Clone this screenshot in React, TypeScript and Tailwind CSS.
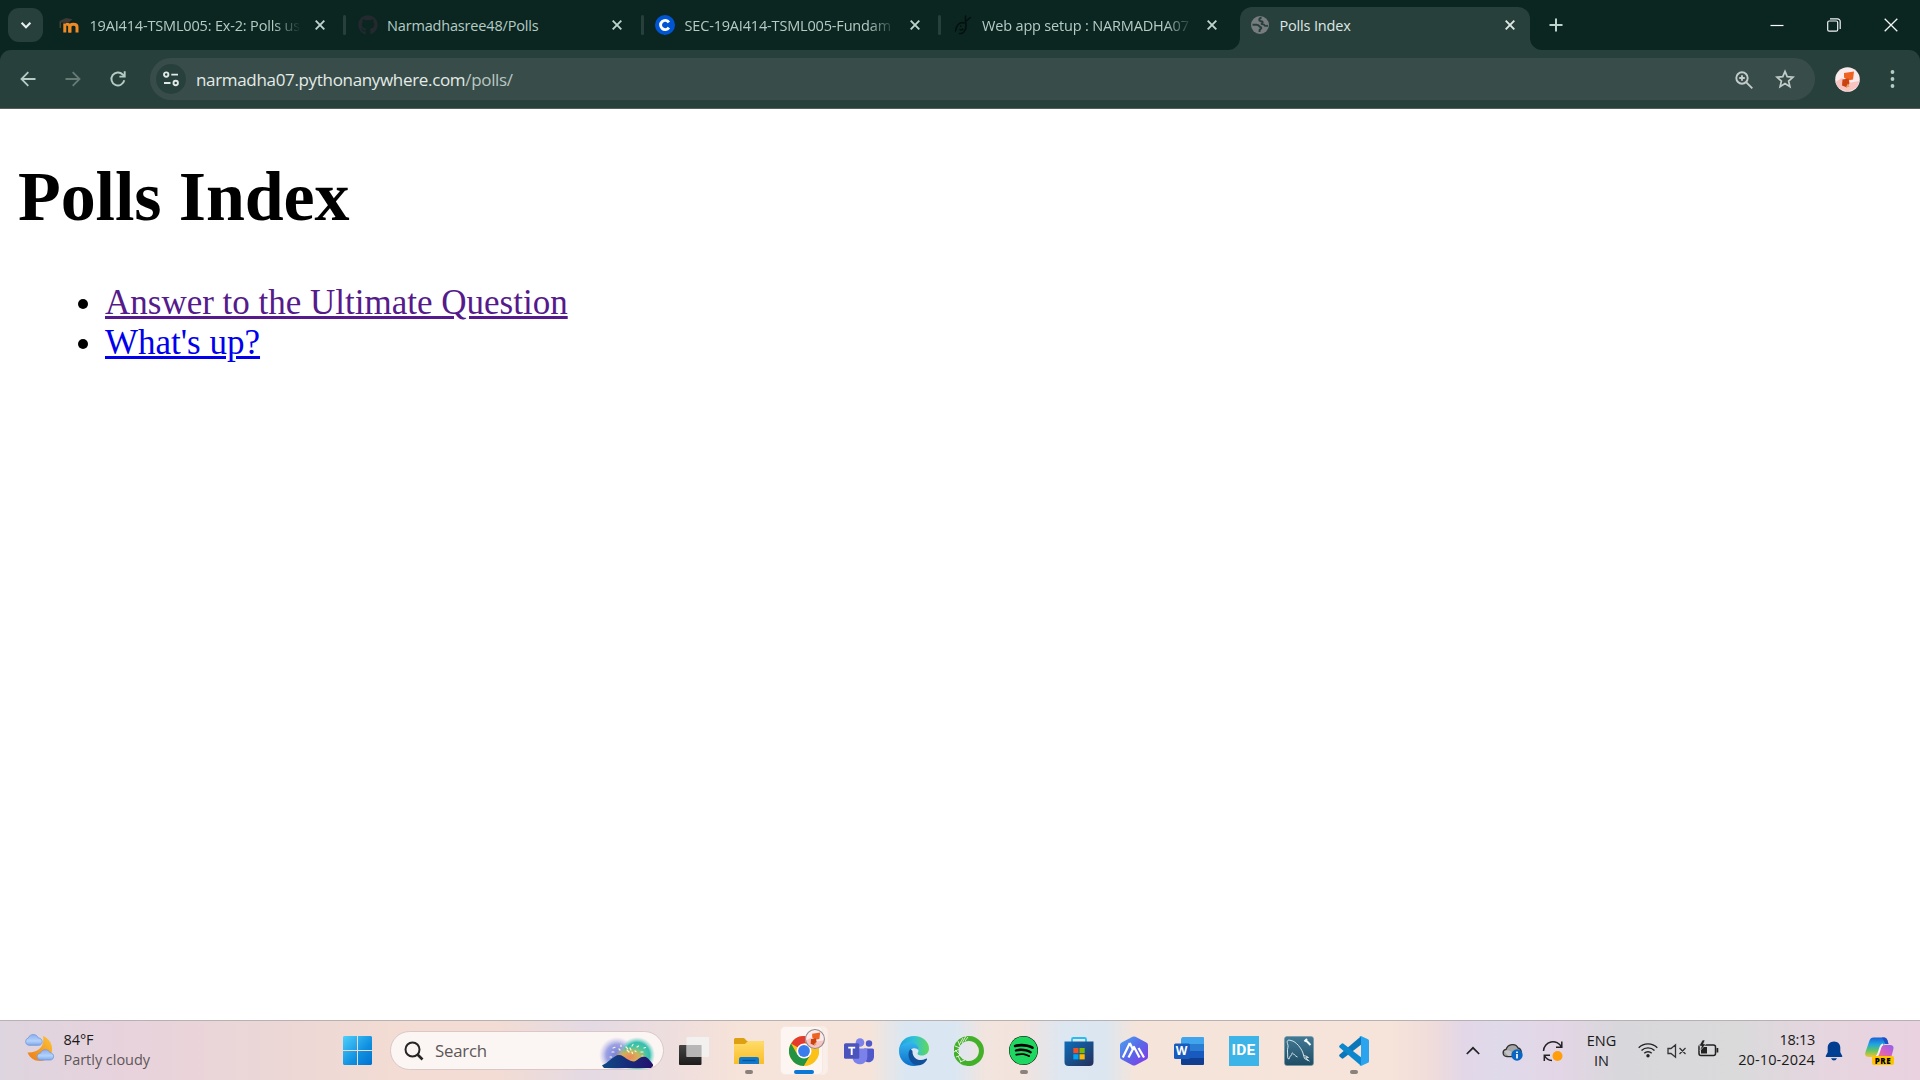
import React from "react";
import { FaGithub, FaSpotify } from "react-icons/fa";

type P = { children: React.ReactNode; className?: string };

/* ---------- favicons ---------- */
const Moodle = () => (
  <svg width="22" height="20" viewBox="0 0 22 20" className="-ml-0.5 shrink-0">
    <path d="M6.800 17.500V8.500M11.800 17.500v-5.700c0-2.200-2-2.800-3.500-2.300" fill="none" stroke="#f08a24" strokeWidth="3" />
    <path d="M11.800 17.500v-5.500c0-3.600 7.200-3.600 7.200 0v5.500" fill="none" stroke="#f08a24" strokeWidth="3" />
    <path d="M1 6.300 8 3l6.500 1.200L10 8 3.500 7.500z" fill="#3d3a36" />
    <path d="M2.200 7v6" stroke="#6b5337" strokeWidth="1" />
  </svg>
);
const Coursera = () => (
  <svg width="20" height="20" viewBox="0 0 20 20">
    <circle cx="10" cy="10" r="10" fill="#0056d2" />
    <path d="M13.900 7.300a4.600 4.600 0 1 0 0 5.400" fill="none" stroke="#fff" strokeWidth="2.900" />
  </svg>
);
const Snake = () => (
  <svg width="20" height="20" viewBox="0 0 20 20" fill="none" stroke="#03100d" strokeWidth="1.500" strokeLinecap="round">
    <path d="M12.500 1v5.500L17.500 2.500M12.500 6.500c1.500 5 .5 9-3.500 12H6.500M11 8C7 6.500 3 10 2.500 16M7.500 11l.2.2M7 14.500c1 .8 2 .5 2.800-.4" />
  </svg>
);
const Globe = () => (
  <svg width="20" height="20" viewBox="0 0 20 20">
    <circle cx="10" cy="10" r="9" fill="#777c7f" />
    <path d="M11.500 2.500c-1.500.5-2.800 1.600-2 3 .7 1.200 2.300.3 3 1.300.6 1-.5 1.800-1.500 2 1 .3 3 .2 3.500 1.400.4.800 1.500.8 3.500.6M2.500 9.800h4c2.500 0 2.600 1.600 3.800 2.200 1.300.6 1.300 1.500.2 2-1 .5-1.200 1.400-1 3" fill="none" stroke="#28403c" strokeWidth="2" />
  </svg>
);
const X = ({ c = "#bdd3cc" }: { c?: string }) => (
  <svg width="20" height="20" viewBox="0 0 20 20">
    <path d="m5.700 5.700 8.600 8.600m0-8.600-8.600 8.600" stroke={c} strokeWidth="1.900" />
  </svg>
);
const Fox = ({ size, ring }: { size: number; ring?: boolean }) => (
  <svg width={size} height={size} viewBox="0 0 25 25">
    <circle cx="12.500" cy="12.500" r="12.300" fill="#fbeaec" />
    <path d="M.5 15 7 11l6 5 11.500-2A12.300 12.300 0 0 1 .5 15z" fill="#f9c3c0" />
    <path d="m9 6 10-1.500-1 8-5 1-4-3z" fill="#ee6322" />
    <path d="m7.500 12.500 6-1 1 4.500-2.500 4.500-5-2z" fill="#c9420f" />
    <path d="m11 20 2-3.500 1.500 3.500z" fill="#e2a764" />
    {ring && <circle cx="12.500" cy="12.500" r="11.800" fill="none" stroke="#8f8a8d" strokeWidth="1.300" />}
  </svg>
);

/* ---------- tabs ---------- */
function Tab({ icon, title, active, last, fade }: { icon: React.ReactNode; title: string; active?: boolean; last?: boolean; fade?: boolean }) {
  return (
    <div className="relative flex h-[43px] w-[297.5px] shrink-0">
      <div className={"flex h-full w-[290.5px] items-center rounded-t-[12px] pb-[7px] pl-[10.5px] " + (active ? "bg-[#28403c] text-[#dfe8e4]" : "text-[#b5cbc4]")}>
        <div className="flex size-5 shrink-0 items-center justify-center">{icon}</div>
        <div className={"mt-px ml-[9.5px] w-[213px] text-[14.5px] leading-5 tracking-[-0.17px] whitespace-nowrap " + (fade ? "[mask-image:linear-gradient(to_right,#000_86%,transparent_99%)]" : "")}>{title}</div>
        <div className="ml-[7px]"><X c={active ? "#dfe8e4" : "#bdd3cc"} /></div>
      </div>
      {active ? (
        <>
          <svg className="absolute bottom-0 -left-3" width="12" height="12"><path d="M12 0v12H0A12 12 0 0 0 12 0z" fill="#28403c" /></svg>
          <svg className="absolute bottom-0 left-[290px]" width="12" height="12"><path d="M0 0v12h12A12 12 0 0 1 0 0z" fill="#28403c" /></svg>
        </>
      ) : (
        !last && <div className="mt-2 ml-[3px] h-5 w-[3px] rounded-full bg-[#27403b]" />
      )}
    </div>
  );
}

const Ctl = ({ children, className = "" }: P) => <div className={"flex h-[49px] w-[57px] items-center justify-center " + className}>{children}</div>;

function TabStrip() {
  return (
    <div className="flex h-[50px] bg-[#0b2621]">
      <div className="mt-2 ml-2 flex h-[34px] w-[35px] shrink-0 items-center justify-center rounded-[11px] bg-[#28403c]">
        <svg width="14" height="14" viewBox="0 0 14 14" fill="none" stroke="#e8f0ed" strokeWidth="2.100"><path d="m2.600 4.800 4.400 4.400 4.400-4.400" /></svg>
      </div>
      <div className="mt-[7px] ml-[6.500px] flex h-[43px]">
        <Tab icon={<Moodle />} title="19AI414-TSML005: Ex-2: Polls us" fade />
        <Tab icon={<FaGithub size={20} color="#24292f" />} title="Narmadhasree48/Polls" />
        <Tab icon={<Coursera />} title="SEC-19AI414-TSML005-Fundam" fade />
        <Tab icon={<Snake />} title="Web app setup : NARMADHA07" fade last />
        <Tab icon={<Globe />} title="Polls Index" active />
      </div>
      <div className="flex h-[50px] w-[38px] items-center justify-center">
        <svg width="14" height="14" viewBox="0 0 14 14" stroke="#bdd3cc" strokeWidth="2"><path d="M7 .5v13M.5 7h13" /></svg>
      </div>
      <div className="mr-px ml-auto flex">
        <Ctl><svg width="14" height="14"><path d="M.5 7.500h13" stroke="#fff" strokeWidth="1.200" /></svg></Ctl>
        <Ctl>
          <svg width="14" height="14" viewBox="0 0 14 14" fill="none" stroke="#f2f5f4" strokeWidth="1.200">
            <rect x=".7" y="3" width="10" height="10.200" rx="1.500" /><path d="M3 .9h7.500a2.600 2.600 0 0 1 2.700 2.600V11" />
          </svg>
        </Ctl>
        <Ctl><svg width="14" height="14" viewBox="0 0 14 14" stroke="#f2f5f4" strokeWidth="1.300"><path d="m.7.7 12.600 12.600m0-12.600L.7 13.300" /></svg></Ctl>
      </div>
    </div>
  );
}

const Arrow = ({ c, flip }: { c: string; flip?: boolean }) => (
  <svg width="16" height="16" viewBox="0 0 16 16" fill="none" stroke={c} strokeWidth="1.800" className={flip ? "rotate-180" : ""}>
    <path d="M15.500 8H1.800M8.300 1.200 1.500 8l6.800 6.800" />
  </svg>
);

function Toolbar() {
  return (
    <div className="bg-[#0b2621]">
      <div className="flex h-[59px] items-center rounded-t-[11px] border-b border-[#55605f] bg-[#28403c]">
        <div className="ml-[19.500px] w-[45px]"><Arrow c="#b5cbc4" /></div>
        <div className="w-[44px]"><Arrow c="#667b76" flip /></div>
        <svg width="18" height="18" viewBox="0 0 18 18" fill="none" stroke="#b5cbc4" strokeWidth="1.900">
          <path d="M15.300 10.300A6.500 6.500 0 1 1 13.700 4.500l1.600 1.700" /><path d="M15.700 1.300v5.300h-5.300" />
        </svg>
        <div className="ml-[23.500px] flex h-[42px] w-[1665px] items-center rounded-full bg-[#384d49] pr-[20px] pl-[6px]">
          <div className="flex size-[30px] items-center justify-center rounded-full bg-[#28403c]">
            <svg width="16" height="16" viewBox="0 0 16 16" fill="none" stroke="#dfe8e4" strokeWidth="1.900">
              <circle cx="3.200" cy="3.600" r="2.200" /><path d="M8.300 3.600H15M1 12h6.500" /><circle cx="12.700" cy="12" r="2.200" />
            </svg>
          </div>
          <div className="mt-0.5 ml-[10px] text-[17px] leading-6 tracking-[-0.33px] text-[#e4ebe8]">narmadha07.pythonanywhere.com<span className="text-[#b9c7c3]">/polls/</span></div>
          <svg className="mt-0.5 mr-[22px] ml-auto" width="18" height="18" viewBox="0 0 18 18" fill="none" stroke="#c3ccca" strokeWidth="1.900">
            <circle cx="7" cy="7" r="5.700" /><path d="m11.300 11.300 6 6M4.200 7h5.600M7 4.200v5.600" />
          </svg>
          <svg width="20" height="20" viewBox="0 0 20 20" fill="none" stroke="#c3ccca" strokeWidth="1.700">
            <path d="m10 2.400 2.200 5.300 5.800.5-4.400 3.800 1.300 5.600-4.900-3-4.900 3 1.300-5.600L2 8.200l5.800-.5z" />
          </svg>
        </div>
        <div className="ml-5"><Fox size={25} /></div>
        <svg className="ml-[22px]" width="20" height="20" viewBox="0 0 20 20" fill="#b5cbc4"><circle cx="10.500" cy="3" r="1.900" /><circle cx="10.500" cy="10" r="1.900" /><circle cx="10.500" cy="17" r="1.900" /></svg>
      </div>
    </div>
  );
}

function Page() {
  return (
    <main className="h-[911px] overflow-hidden bg-white px-[17.500px] font-['Liberation_Serif',serif] text-black">
      <h1 className="mt-[48px] ml-[0.500px] text-[70px] leading-[80px] font-bold tracking-[-0.100px]">Polls Index</h1>
      <ul className="mt-[46px] list-disc pl-[87.500px] text-[35px] leading-[40px]">
        <li><a className="text-[#551a8b] underline">Answer to the Ultimate Question</a></li>
        <li><a className="text-[#0000ee] underline">What's up?</a></li>
      </ul>
    </main>
  );
}

/* ---------- taskbar ---------- */
const Weather = () => (
  <svg width="31" height="30" viewBox="0 0 31 30">
    <defs>
      <linearGradient id="moon" x1="1" y1="0" x2="0" y2="1"><stop stopColor="#fdc53a" /><stop offset="1" stopColor="#ec7a16" /></linearGradient>
      <linearGradient id="cl" x1="0" y1="0" x2="0" y2="1"><stop stopColor="#8db0f0" /><stop offset=".6" stopColor="#b3d2fa" /><stop offset="1" stopColor="#7fa6ea" /></linearGradient>
    </defs>
    <path d="M19 3c14 6 11 25-3 25-6 0-10-3-12.500-8.500C14 20 21 14 19 3z" fill="url(#moon)" />
    <path d="M4.500 12.300a3.800 3.800 0 0 1-.3-7.300C6 .4 12.500.3 14.300 5c5 0 5.200 7.300.3 7.300z" fill="url(#cl)" stroke="#7398dd" strokeWidth=".8" />
    <path d="M16.500 27a3.400 3.400 0 0 1 0-6.800c1.600-4.600 8-4.600 9.300-.6 5 .2 5 7.400.5 7.400z" fill="url(#cl)" stroke="#7398dd" strokeWidth=".8" />
  </svg>
);
const Windows = () => (
  <svg width="29" height="29" viewBox="0 0 29 29">
    <defs><linearGradient id="win" x1="0" y1="0" x2="1" y2="1"><stop stopColor="#4fd0fb" /><stop offset=".6" stopColor="#0f8fe0" /><stop offset="1" stopColor="#0072cf" /></linearGradient></defs>
    <path d="M1 0h13v14H0V1zM15 0h13l1 1v13H15zM0 15h14v14H1l-1-1zM15 15h14v13l-1 1H15z" fill="url(#win)" />
  </svg>
);
const Fireworks = () => (
  <svg width="56" height="32" viewBox="0 0 56 32">
    <defs>
      <radialGradient id="f1"><stop stopColor="#6c7be0" /><stop offset=".6" stopColor="#8c93e0" stopOpacity=".85" /><stop offset="1" stopColor="#b7b5ea" stopOpacity="0" /></radialGradient>
      <radialGradient id="f2"><stop stopColor="#6fd08e" /><stop offset=".7" stopColor="#35bfb0" /><stop offset="1" stopColor="#7bd6cc" stopOpacity="0" /></radialGradient>
      <radialGradient id="f3"><stop stopColor="#f4845a" /><stop offset=".5" stopColor="#dfae52" stopOpacity=".9" /><stop offset="1" stopColor="#d8b64c" stopOpacity="0" /></radialGradient>
      <linearGradient id="f4"><stop stopColor="#0c4a86" /><stop offset="1" stopColor="#24106e" /></linearGradient>
    </defs>
    <circle cx="18" cy="18" r="18" fill="url(#f1)" /><circle cx="38" cy="18" r="18" fill="url(#f2)" />
    <ellipse cx="31" cy="20" rx="17" ry="10" fill="url(#f3)" />
    <path d="M14 11l2-.7M13 15h2M22 8v1.500M27 10l1.500 1.500M28 13l2 2M33 9l1-1.500M38 10l1.500-1M42 15h2M45 11l1.500-.5M36 14l1 .5M33 15l.5 1.500M20 12l1 1M11 20h1.500M43 19l2 .5M31 11l1 2" stroke="#fff6cf" strokeWidth="1.200" strokeLinecap="round" />
    <path d="M3 28.500c3-1.500 5-3 8-5.500 4-3 6-5 9-5s5 2 8 4c3 1.500 4 2.500 7 2.500 3-.5 6-5 10-5 3 0 6 4 9 8v1.500l-2 2H5z" fill="url(#f4)" />
  </svg>
);
const TaskView = () => (
  <svg width="30" height="30" viewBox="0 0 30 30">
    <defs><linearGradient id="tv" x1="0" y1="0" x2="0" y2="1"><stop stopColor="#454545" /><stop offset="1" stopColor="#1c1c1c" /></linearGradient></defs>
    <rect y="9" width="22.500" height="20" rx="1" fill="url(#tv)" />
    <rect x="7.500" y="1" width="22.500" height="20" rx="1" fill="#f3f3f3" fillOpacity=".88" />
    <path d="M7.500 9h15v12h-15z" fill="#aaa" fillOpacity=".75" />
  </svg>
);
const Folder = () => (
  <svg width="30" height="30" viewBox="0 0 30 30">
    <defs><linearGradient id="fo" x1="0" y1="0" x2="0" y2="1"><stop stopColor="#ffdc6a" /><stop offset="1" stopColor="#f9bd27" /></linearGradient></defs>
    <path d="M0 3.500Q0 2 1.500 2H10l3 3h15.500Q30 5 30 6.500V12H0z" fill="#dca012" />
    <path d="M0 8h11l3-3h14.500Q30 5 30 6.500V28H0z" fill="url(#fo)" />
    <path d="M5 28v-5a2 2 0 0 1 2-2h16a2 2 0 0 1 2 2v5z" fill="#1079cb" /><path d="M8.500 24.500h13" stroke="#07559c" strokeWidth="1.300" />
  </svg>
);
const Chrome = () => (
  <svg width="30" height="30" viewBox="0 0 30 30">
    <circle cx="15" cy="15" r="15" fill="#fbc116" />
    <path d="M15 15 2 7.500A15 15 0 0 1 28 7.500H15z" fill="#e33b2e" />
    <path d="M2 7.500A15 15 0 0 0 15 30l6.500-11.200L15 15 8.500 18.800z" fill="#229342" />
    <path d="M15 7.500H28A15 15 0 0 1 15 30l6.500-11.200z" fill="#fbc116" />
    <circle cx="15" cy="15" r="7.500" fill="#fff" /><circle cx="15" cy="15" r="5.900" fill="#3a7cec" />
  </svg>
);
const Teams = () => (
  <svg width="30" height="30" viewBox="0 0 30 30">
    <circle cx="16" cy="6.500" r="4.300" fill="#7b83eb" /><circle cx="25" cy="7.500" r="3.200" fill="#5059c9" />
    <path d="M20 12.500h8.500q1.500 0 1.500 1.500v6.500a5.500 5.500 0 0 1-9 4.500z" fill="#5059c9" />
    <path d="M9 12.500h13q1.300 0 1.300 1.300V21a7.500 7.500 0 0 1-14.500 2.500z" fill="#7b83eb" />
    <rect y="7.300" width="15.300" height="15.500" rx="1.500" fill="#4b53bc" />
    <path d="M4.200 11.600h7M7.700 11.600v7.400" stroke="#fff" strokeWidth="1.900" />
  </svg>
);
const Edge = () => (
  <svg width="30" height="30" viewBox="0 0 30 30">
    <defs>
      <linearGradient id="e1"><stop stopColor="#1f9fe0" /><stop offset=".5" stopColor="#2fc2d8" /><stop offset="1" stopColor="#62d858" /></linearGradient>
      <linearGradient id="e2" x1="0" y1="0" x2="0" y2="1"><stop stopColor="#35b4ee" /><stop offset="1" stopColor="#0b6fca" /></linearGradient>
    </defs>
    <path d="M0 14C1 5 7 0 15 0c9 0 15 6 15 12.500 0 4.500-3.500 7-7 7-3.500 0-5.300-1.300-4-3 2-3-.5-8.500-7-8.500-5 0-9 2-12 6z" fill="url(#e1)" />
    <path d="M0 15c0-5 5-8.500 10-8.500 7 0 10.500 4.500 9.500 8-2-3.500-9-3-9 3.500 0 5 4 9 9 11.300C10 32 0 26 0 15z" fill="url(#e2)" />
    <path d="M11.500 13C8 17 9 25 15.500 28.500c6 2.500 11-1.500 12.500-5 .4-1-.5-1.300-1.200-.8-7 3.600-13.800-.7-13.300-7.700z" fill="#11509b" />
  </svg>
);
const Anaconda = () => (
  <svg width="30" height="30" viewBox="0 0 30 30" fill="none" stroke="#43b02a">
    <path d="M15 2.500a12.500 12.500 0 1 1-5 24" strokeWidth="5" />
    <path d="M15 2.500A12.500 12.500 0 0 0 11 27" strokeWidth="5" />
    <path d="M12 0 8 7M9 2 5 9M4 5l2 5M1 10l5 2M0 16l5-3M1 14l5 5M2 21l5-2M4 20l3 6M6 26l5-2M14 1l-3 4" stroke="#f0efe6" strokeWidth=".9" />
  </svg>
);
const Store = () => (
  <svg width="30" height="30" viewBox="0 0 30 30">
    <defs><linearGradient id="st" x1="0" y1="0" x2="1" y2="1"><stop stopColor="#0d6dbb" /><stop offset="1" stopColor="#25305a" /></linearGradient></defs>
    <path d="M8 6V3.200Q8 2 9.200 2h11.600Q22 2 22 3.200V6" fill="none" stroke="#27bdf0" strokeWidth="1.800" />
    <path d="M.5 5.500h29V26a4 4 0 0 1-4 4h-21a4 4 0 0 1-4-4z" fill="url(#st)" />
    <path d="M9.300 12h5.200v5.200H9.300z" fill="#f25022" /><path d="M15.500 12h5.200v5.200h-5.200z" fill="#7fba00" />
    <path d="M9.300 18.200h5.200v5.200H9.300z" fill="#00a4ef" /><path d="M15.500 18.200h5.200v5.200h-5.200z" fill="#ffb900" />
  </svg>
);
const Hex = () => (
  <svg width="30" height="30" viewBox="0 0 30 30">
    <defs><linearGradient id="hx" x1="0" y1="0" x2="1" y2="1"><stop stopColor="#4ba3f0" /><stop offset=".5" stopColor="#5868e8" /><stop offset="1" stopColor="#8a35ea" /></linearGradient></defs>
    <path d="M13.500.8Q15 0 16.500.8l10.800 5.700Q29 7.400 29 9v12q0 1.600-1.700 2.500l-10.800 5.700q-1.500.8-3 0L2.700 23.500Q1 22.600 1 21V9q0-1.600 1.700-2.500z" fill="url(#hx)" />
    <path d="m3.800 21.500 7-14.500M10.800 7l3.400 7M9.500 21.500l5.500-10.500 5.500 10.500M19.500 12l5.500 9.500" fill="none" stroke="#fff" strokeWidth="2.200" strokeLinejoin="round" />
  </svg>
);
const Word = () => (
  <div className="relative size-[30px]">
    <svg width="30" height="30" viewBox="0 0 30 30">
      <path d="M8.500 1H29q1 0 1 1v6H7V2.500z" fill="#41a5ee" /><path d="M7 8h23v7H7z" fill="#2b7cd3" /><path d="M7 15h23v7H7z" fill="#185abd" /><path d="M7 22h23v6q0 1-1 1H8.500Q7 29 7 28z" fill="#103f91" />
      <rect y="7.500" width="16" height="15.500" rx="1.500" fill="#185abd" />
    </svg>
    <span className="absolute top-[7px] left-0 w-4 text-center text-[12px] leading-4 font-bold text-white">W</span>
  </div>
);
const Ide = () => <div className="flex size-[30px] items-center justify-center bg-[#3db4e7] pb-px font-[Roboto,sans-serif] text-[15.500px] leading-5 font-bold tracking-[0.2px] text-white">IDE</div>;
const Workbench = () => (
  <svg width="30" height="30" viewBox="0 0 30 30">
    <defs><linearGradient id="wb" x1="0" y1="0" x2="0" y2="1"><stop stopColor="#427a96" /><stop offset="1" stopColor="#1f4c65" /></linearGradient></defs>
    <rect x=".5" y=".5" width="29" height="29" rx="2.500" fill="url(#wb)" stroke="#6d94a5" strokeWidth=".6" />
    <path d="M7 19.500c-2 .5-1 4-2.500 3.500-1.500-1-.5-4.500-1-7C3 12 5 11 3.500 7.500 2.500 4.500 4 3.500 7 4.500c3 .5 5 2.500 7.500 5 3 3.500 4.500 7 5 9.500.8 1 4 1.200 5 2.500l-3 .3 4 3.500M19.500 19l1 3.500 3.500 2M7.500 19.500c.5-1.500 0-2.500 1-2.500 1.500 1 2.500 3 5 4" fill="none" stroke="#e7f0f3" strokeWidth=".9" />
    <path d="m21.500 4 5 5M20.500 5.500l2.500-2.500" stroke="#fff" strokeWidth="2" />
  </svg>
);
const VSCode = () => (
  <svg width="30" height="30" viewBox="0 0 30 30">
    <path d="M22 .2v8.500L4.500 22.300q-1 .7-1.900 0L.6 20.500q-1-1 0-2z" fill="#0b77b9" />
    <path d="M22 29.800v-8.500L4.500 7.700q-1-.7-1.900 0L.6 9.500q-1 1 0 2z" fill="#0c86cd" />
    <path d="M22 .1 29 3.300q1 .5 1 1.500v20.400q0 1-1 1.500l-7 3.200q-1 .3-1.800-.5 1.800 1 1.800-1.400V2q0-2.300-1.800-1.300Q21-.2 22 .1z" fill="#2aa4ef" />
  </svg>
);
const Copilot = () => (
  <div className="relative h-[30px] w-[30px]">
    <svg width="30" height="30" viewBox="0 0 30 30">
      <defs>
        <linearGradient id="c1" x1="0" y1="0" x2="0" y2="1"><stop stopColor="#1b5fd8" /><stop offset=".35" stopColor="#20a5e0" /><stop offset=".65" stopColor="#5cc46a" /><stop offset="1" stopColor="#f2c52b" /></linearGradient>
        <linearGradient id="c2" x1="1" y1="0" x2="0" y2="1"><stop stopColor="#8e62f0" /><stop offset=".5" stopColor="#d660c0" /><stop offset="1" stopColor="#f58255" /></linearGradient>
      </defs>
      <path d="M8.500 1.500H19q2.500 0 3.500 3l1 3.500h-3q-3 0-4 3l-3 7q-1 3-4.500 3H4q-5 0-3.500-5L4.500 4.500q1-3 4-3z" fill="url(#c1)" />
      <path d="M20 9h5q4.500 0 3.300 4.500L26 22H9q3 0 4-3l2.500-7Q16.500 9 20 9z" fill="url(#c2)" />
      <path d="M17 1.500h2q2.500 0 3.500 3l1 3.500h-3z" fill="#1f4fc4" />
      <path d="M18 8.500c-4 0-3 12-8 13" stroke="#f8eef4" strokeWidth="2" fill="none" />
    </svg>
    <span className="absolute top-[20px] left-[7px] h-[9px] w-[22px] rounded-[2px] bg-[#fdc500] text-center text-[8px] leading-[9px] font-extrabold tracking-[0.5px] text-black">PRE</span>
  </div>
);

const Slot = ({ children, dot }: { children: React.ReactNode; dot?: boolean }) => (
  <div className="relative flex h-full w-[55px] items-center justify-center">
    {children}
    {dot && <span className="absolute bottom-[6px] left-[23.500px] h-1 w-2 rounded-full bg-[#8a807c]" />}
  </div>
);

function Taskbar() {
  return (
    <div className="flex h-[60px] items-center border-t border-[#b8b1b2] bg-[linear-gradient(90deg,#ddd5df_0px,#e8d2dc_130px,#ecd7d6_280px,#f2dcd3_400px,#f2dcd4_500px,#e4dae4_590px,#f0dfdc_690px,#f6e3d9_740px,#f6e4da_870px,#dae7f2_905px,#dae7f2_955px,#f2e4de_985px,#f3e3dd_1020px,#dce7f2_1065px,#dce6f1_1105px,#f5e4da_1135px,#f6e4da_1390px,#f0dcda_1430px,#e2d7e8_1465px,#dfdaea_1500px,#e3d6e6_1560px,#d8d7db_1620px,#dadadb_1740px,#e6d5df_1830px,#ead2e0_1920px)] text-[14.500px] text-[#1a1a1a]">
      <div className="flex w-[343px] items-center pb-px pl-[24px]">
        <div className="-mt-1"><Weather /></div>
        <div className="ml-[8.500px] leading-5">
          <div className="tracking-[-0.1px]">84°F</div>
          <div className="tracking-[-0.030px] text-[#5d5759]">Partly cloudy</div>
        </div>
      </div>
      <Windows />
      <div className="ml-[17.500px] flex h-[39px] w-[274px] items-center rounded-full border border-[#dbc8c6] bg-[#fbf5f3] pl-[13px]">
        <svg width="20" height="20" viewBox="0 0 20 20" fill="none" stroke="#262626" strokeWidth="2"><circle cx="8.500" cy="8.500" r="7" /><path d="m13.500 13.500 5 5" strokeWidth="2.600" /></svg>
        <span className="mt-px ml-[11.500px] text-[16.800px] tracking-[-0.200px] text-[#5b5757]">Search</span>
        <div className="mt-1 mr-[8px] ml-auto"><Fireworks /></div>
      </div>
      <div className="ml-[2.500px] flex h-full">
        <Slot><TaskView /></Slot>
        <Slot dot><Folder /></Slot>
        <div className="relative flex h-full w-[55px] items-center justify-center">
          <div className="absolute top-[5px] left-[3.500px] h-[49px] w-[48px] rounded-[5px] border border-[#f9ece6] bg-[#faeee8]" />
          <div className="absolute top-[5px] left-[3.500px] h-[49px] w-[43px] rounded-[5px] border border-[#f6e8e2] bg-[#fdf5f1]" />
          <div className="relative"><Chrome /></div>
          <div className="absolute top-[8px] left-[28.500px]"><Fox size={20} ring /></div>
          <div className="absolute bottom-[6px] left-[17.500px] h-1 w-5 rounded-full bg-[#0a78d4]" />
        </div>
        <Slot><Teams /></Slot>
        <Slot><Edge /></Slot>
        <Slot><Anaconda /></Slot>
        <Slot dot><div className="rounded-full bg-black"><FaSpotify size={29} color="#1ed760" /></div></Slot>
        <Slot><Store /></Slot>
        <Slot><Hex /></Slot>
        <Slot><Word /></Slot>
        <Slot><Ide /></Slot>
        <Slot><Workbench /></Slot>
        <Slot dot><VSCode /></Slot>
      </div>
      <svg className="ml-[84.500px]" width="14" height="14" viewBox="0 0 14 14" fill="none" stroke="#222" strokeWidth="1.700"><path d="m.8 10 6.200-6.200L13.200 10" /></svg>
      <svg className="mt-[3px] ml-[22px]" width="21" height="20" viewBox="0 0 21 20">
        <path d="M5 14.500C0 14 0 8.500 4 7.500 6 1.500 14 1 16 6c4 1 4 6 2 8.500z" fill="#a6a6a6" stroke="#303030" strokeWidth="1.300" />
        <path d="M2 9c4-2 7 0 9 2l5 3H6" fill="#c4c4c4" />
        <circle cx="15" cy="13" r="5.700" fill="#0a66c2" /><path d="M15 9.500v1.500M15 12v4.500" stroke="#fff" strokeWidth="1.700" />
      </svg>
      <svg className="ml-[19px]" width="22" height="22" viewBox="0 0 22 22" fill="none" stroke="#222" strokeWidth="1.500">
        <path d="M1.500 11A9.500 9.500 0 0 1 19.500 7M19.800 1.500V7.300H14M10 20.500a9 9 0 0 1-7.500-5M8 15.200H2.300V21" />
        <circle cx="15.500" cy="16" r="5" fill="#ff9d0a" stroke="none" />
      </svg>
      <div className="ml-[13px] w-[50px] text-center leading-5"><div>ENG</div><div>IN</div></div>
      <svg className="mt-[-1px] ml-[11px]" width="20" height="16" viewBox="0 0 20 16" fill="none" stroke="#222" strokeWidth="1.400">
        <path d="M.7 5.700a13.200 13.200 0 0 1 18.600 0M3.500 8.600a9.200 9.200 0 0 1 13 0M6.300 11.300a5.300 5.300 0 0 1 7.400 0" /><circle cx="10" cy="13.800" r="1.700" fill="#222" stroke="none" />
      </svg>
      <svg className="ml-[9px]" width="20" height="16" viewBox="0 0 20 16" fill="none" stroke="#333" strokeWidth="1.300">
        <path d="M1 5.500h3L8.500 1.800v12.400L4 10.500H1zM12.500 5l6 6m0-6-6 6" />
      </svg>
      <svg className="mt-[-3px] ml-[11px]" width="21" height="18" viewBox="0 0 21 18">
        <rect x="1" y="5" width="16.500" height="10.500" rx="2" fill="none" stroke="#222" strokeWidth="1.500" />
        <path d="M3 7h6v6.500H3zM18.500 8h1.800v4.500h-1.800z" fill="#222" />
        <path d="M4.500 0 1 6h2.500L2 11l6-7H5.500L7 0z" fill="#222" stroke="#dad9db" strokeWidth=".6" />
      </svg>
      <div className="-mt-0.5 ml-auto text-right leading-5"><div className="tracking-[-0.3px]">18:13</div><div className="tracking-[0.120px]">20-10-2024</div></div>
      <svg className="ml-[10px]" width="18" height="20" viewBox="0 0 18 20" fill="#003e92">
        <path d="M9 .5c4 0 6.300 2.800 6.300 6.300v4.400l2 3.700q.3 1-.8 1h-15q-1.100 0-.8-1l2-3.700V6.800C2.700 3.300 5 .5 9 .5zM6 17.200h6q-1 2.300-3 2.300t-3-2.300z" />
      </svg>
      <div className="mr-[25px] ml-[22px]"><Copilot /></div>
    </div>
  );
}

export default function App() {
  return (
    <div className="flex h-[1080px] w-[1920px] flex-col overflow-hidden font-['Open_Sans',sans-serif]">
      <TabStrip />
      <Toolbar />
      <Page />
      <Taskbar />
    </div>
  );
}
